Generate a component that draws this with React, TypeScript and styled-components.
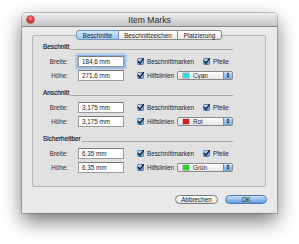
import React from "react";
import styled, { createGlobalStyle } from "styled-components";

const GlobalStyle = createGlobalStyle`
  html, body {
    margin: 0;
    padding: 0;
    background: #ffffff;
  }
  body {
    font-family: "Liberation Sans", Arial, sans-serif;
    color: #222;
  }
`;

type Swatch = { name: string; color: string };

type Group = {
  title: string;
  width: string;
  height: string;
  guide: Swatch;
  focused?: boolean;
};

const groups: Group[] = [
  { title: "Beschnitt", width: "184,6 mm", height: "271,6 mm", guide: { name: "Cyan", color: "#2fdede" }, focused: true },
  { title: "Anschnitt", width: "3,175 mm", height: "3,175 mm", guide: { name: "Rot", color: "#d81c1c" } },
  { title: "Sicherheitber", width: "6,35 mm", height: "6,35 mm", guide: { name: "Grün", color: "#2ed32e" } },
];

const tabs = ["Beschnitte", "Beschnittzeichen", "Platzierung"];

const CheckIcon = () => (
  <svg width="7" height="7" viewBox="0 0 7 7">
    <defs>
      <linearGradient id="cbg" x1="0" y1="0" x2="0" y2="1">
        <stop offset="0" stopColor="#c6ddf6" />
        <stop offset="1" stopColor="#5f97d6" />
      </linearGradient>
    </defs>
    <rect x="0.5" y="0.5" width="6" height="6" rx="1" fill="url(#cbg)" stroke="#46699b" strokeWidth="0.8" />
    <path d="M1.5 3.5 L3 5.3 L6.5 0.5" fill="none" stroke="#101a35" strokeWidth="1.3" strokeLinecap="round" />
  </svg>
);

const StepperArrows = () => (
  <svg width="4" height="6" viewBox="0 0 4 6">
    <path d="M0.3 2.4 L2 0.6 L3.7 2.4 Z" fill="#1d2b45" />
    <path d="M0.3 3.6 L2 5.4 L3.7 3.6 Z" fill="#1d2b45" />
  </svg>
);

const App = () => {
  return (
    <Page>
      <GlobalStyle />
      <Window>
        <TitleBar>
          <CloseLight />
          <Title>Item Marks</Title>
          <span />
        </TitleBar>
        <Body>
          <Tabs>
            {tabs.map((t, i) => (
              <Tab key={t} $active={i === 0}>
                {t}
              </Tab>
            ))}
          </Tabs>
          <Panel>
            {groups.map((g) => (
              <Section key={g.title}>
                <SectionHeader>
                  <span>{g.title}</span>
                  <Rule />
                </SectionHeader>
                <Rows>
                  <Row>
                    <Label>Breite:</Label>
                    <Field $focused={g.focused}>{g.width}</Field>
                    <Check $width="66px">
                      <CheckIcon />
                      <span>Beschnittmarken</span>
                    </Check>
                    <Check>
                      <CheckIcon />
                      <span>Pfeile</span>
                    </Check>
                  </Row>
                  <Row>
                    <Label>Höhe:</Label>
                    <Field>{g.height}</Field>
                    <Check $width="40px">
                      <CheckIcon />
                      <span>Hilfslinien</span>
                    </Check>
                    <Popup>
                      <ColorChip style={{ background: g.guide.color }} />
                      <PopupText>{g.guide.name}</PopupText>
                      <Stepper>
                        <StepperArrows />
                      </Stepper>
                    </Popup>
                  </Row>
                </Rows>
              </Section>
            ))}
          </Panel>
          <Buttons>
            <PushButton>Abbrechen</PushButton>
            <PushButton $primary>OK</PushButton>
          </Buttons>
        </Body>
      </Window>
    </Page>
  );
};

export default App;

const Page = styled.div`
  width: 299px;
  height: 244px;
  box-sizing: border-box;
  padding: 13px 0 0 22px;
  overflow: hidden;
`;

const Window = styled.div`
  width: 255px;
  display: flex;
  flex-direction: column;
  background: #e9e9e9;
  border-radius: 4px 4px 0 0;
  box-shadow: 0 8px 20px rgba(0, 0, 0, 0.55), 0 0 0 1px rgba(0, 0, 0, 0.2);
`;

const TitleBar = styled.div`
  height: 13px;
  display: grid;
  grid-template-columns: 1fr auto 1fr;
  align-items: center;
  background: linear-gradient(#eeeeee, #c4c4c4);
  border-bottom: 1px solid #8a8a8a;
  border-radius: 4px 4px 0 0;
`;

const CloseLight = styled.span`
  width: 7px;
  height: 7px;
  margin-left: 5px;
  border-radius: 50%;
  background: radial-gradient(circle at 50% 35%, #ff9a9a 0, #e63b3b 45%, #9e0d0d 100%);
  box-shadow: 0 0 0 0.5px #7a1010;
`;

const Title = styled.div`
  font-size: 8.6px;
  color: #2a2a2a;
`;

const Body = styled.div`
  display: flex;
  flex-direction: column;
  padding: 3px 11px 9px 10px;
`;

const Tabs = styled.div`
  align-self: center;
  display: flex;
  height: 10px;
  margin-bottom: -5px;
  position: relative;
  z-index: 1;
`;

const Tab = styled.div<{ $active?: boolean }>`
  display: flex;
  align-items: center;
  padding: 0 5.5px;
  font-size: 6.3px;
  color: #1e1e1e;
  border: 1px solid #8c8c8c;
  border-left-width: 0;
  background: ${(p) =>
    p.$active ? "linear-gradient(#d6e8f9, #9dc6ee)" : "linear-gradient(#ffffff, #e7e7e7)"};
  border-color: ${(p) => (p.$active ? "#6f93bf" : "#8c8c8c")};

  &:first-child {
    border-left-width: 1px;
    border-radius: 3px 0 0 3px;
  }
  &:last-child {
    border-radius: 0 3px 3px 0;
  }
`;

const Panel = styled.div`
  display: flex;
  flex-direction: column;
  gap: 8px;
  padding: 7px 0 13px 10px;
  background: #e1e1e1;
  border: 1px solid #b6b6b6;
  border-radius: 2px;
`;

const Section = styled.div`
  display: flex;
  flex-direction: column;
`;

const SectionHeader = styled.div`
  width: 190px;
  height: 8px;
  display: flex;
  align-items: flex-end;
  font-size: 6.4px;
  line-height: 8px;
  color: #111111;
  -webkit-text-stroke: 0.15px #111111;
`;

const Rule = styled.div`
  flex: 1;
  margin: 0 0 1px 1px;
  border-bottom: 1px solid #a9a9a9;
`;

const Rows = styled.div`
  display: flex;
  flex-direction: column;
  gap: 2px;
  margin-top: 4px;
`;

const Row = styled.div`
  display: flex;
  align-items: center;
  height: 12px;
  font-size: 6.3px;
`;

const Label = styled.div`
  width: 25px;
  margin-right: 10px;
  text-align: right;
  color: #2b2b2b;
`;

const Field = styled.div<{ $focused?: boolean }>`
  width: 46px;
  height: 11px;
  box-sizing: border-box;
  display: flex;
  align-items: center;
  padding: 0 3px;
  background: #ffffff;
  border: 1px solid #9c9c9c;
  border-top-color: #777777;
  color: #1a1a1a;
  box-shadow: ${(p) =>
    p.$focused ? "0 0 0 1px #8fb9ea, 0 0 2px 2px rgba(90, 145, 220, 0.55)" : "none"};
`;

const Check = styled.div<{ $width?: string }>`
  display: flex;
  align-items: center;
  gap: 3px;
  width: ${(p) => p.$width || "auto"};
  margin-left: 13px;

  & + & {
    margin-left: 0;
  }
  svg {
    flex-shrink: 0;
  }
`;

const Popup = styled.div`
  width: 56px;
  height: 9px;
  box-sizing: border-box;
  display: flex;
  align-items: center;
  background: linear-gradient(#ffffff, #e4e4e4);
  border: 1px solid #8a8a8a;
  border-radius: 2px;
  overflow: hidden;
`;

const ColorChip = styled.span`
  width: 6px;
  height: 5px;
  margin-left: 5px;
  box-shadow: 0 0 0 0.5px rgba(0, 0, 0, 0.35);
`;

const PopupText = styled.span`
  margin-left: 4px;
  font-size: 6.3px;
  color: #1a1a1a;
`;

const Stepper = styled.span`
  margin-left: auto;
  width: 8px;
  height: 100%;
  display: flex;
  align-items: center;
  justify-content: center;
  background: linear-gradient(#cfe3f8, #6ea3db);
  border-left: 1px solid #6a8fbf;
`;

const Buttons = styled.div`
  display: flex;
  justify-content: flex-end;
  gap: 7px;
  margin: 8px -1px 0 0;
`;

const PushButton = styled.div<{ $primary?: boolean }>`
  width: ${(p) => (p.$primary ? "42px" : "43px")};
  height: 9px;
  box-sizing: border-box;
  display: flex;
  align-items: center;
  justify-content: center;
  font-size: 6.3px;
  color: #1a1a1a;
  border-radius: 5px;
  border: 1px solid ${(p) => (p.$primary ? "#4b77b3" : "#7b7b7b")};
  background: ${(p) =>
    p.$primary ? "linear-gradient(#c9e1f8, #5f9ce0)" : "linear-gradient(#ffffff, #e2e2e2)"};
`;
